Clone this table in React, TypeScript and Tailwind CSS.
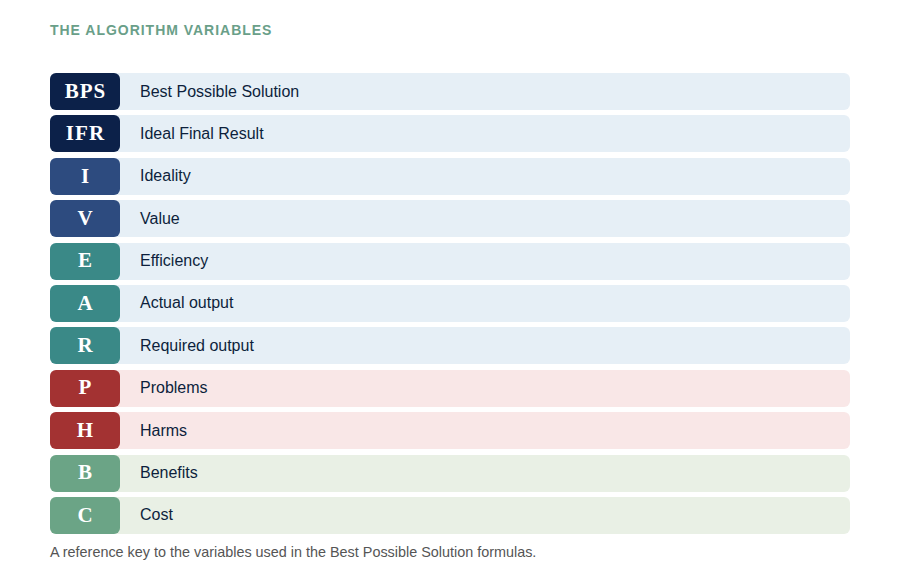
const VARIABLES = [
  { key: "BPS", label: "Best Possible Solution", badge: "bg-[#0c2149]", row: "bg-[#e6eff6]" },
  { key: "IFR", label: "Ideal Final Result", badge: "bg-[#0c2149]", row: "bg-[#e6eff6]" },
  { key: "I", label: "Ideality", badge: "bg-[#2d4b7f]", row: "bg-[#e6eff6]" },
  { key: "V", label: "Value", badge: "bg-[#2d4b7f]", row: "bg-[#e6eff6]" },
  { key: "E", label: "Efficiency", badge: "bg-[#3a8987]", row: "bg-[#e6eff6]" },
  { key: "A", label: "Actual output", badge: "bg-[#3a8987]", row: "bg-[#e6eff6]" },
  { key: "R", label: "Required output", badge: "bg-[#3a8987]", row: "bg-[#e6eff6]" },
  { key: "P", label: "Problems", badge: "bg-[#a33232]", row: "bg-[#f9e7e7]" },
  { key: "H", label: "Harms", badge: "bg-[#a33232]", row: "bg-[#f9e7e7]" },
  { key: "B", label: "Benefits", badge: "bg-[#6ba486]", row: "bg-[#e9f0e5]" },
  { key: "C", label: "Cost", badge: "bg-[#6ba486]", row: "bg-[#e9f0e5]" },
];

export default function App() {
  return (
    <div className="min-h-[577px] bg-white px-[50px] pt-[21px] font-['Liberation_Sans',Arial,sans-serif]">
      <h2 className="text-[14px] font-bold tracking-[0.07em] text-[#6a9f89] leading-[18px]">
        THE ALGORITHM VARIABLES
      </h2>

      <div className="mt-[34px] flex w-[800px] flex-col gap-[5.4px]">
        {VARIABLES.map((v) => (
          <div key={v.key} className={`flex h-[37px] items-center rounded-[6px] ${v.row}`}>
            <div
              className={`flex h-full w-[70px] shrink-0 items-center justify-center rounded-[6px] pl-[1px] font-['Liberation_Serif',serif] text-[21px] font-bold tracking-[0.05em] text-white ${v.badge}`}
            >
              {v.key}
            </div>
            <span className="pl-[20px] text-[16px] text-[#0d1f3c]">{v.label}</span>
          </div>
        ))}
      </div>

      <p className="mt-[8px] text-[14.4px] text-[#555555]">
        A reference key to the variables used in the Best Possible Solution formulas.
      </p>
    </div>
  );
}
